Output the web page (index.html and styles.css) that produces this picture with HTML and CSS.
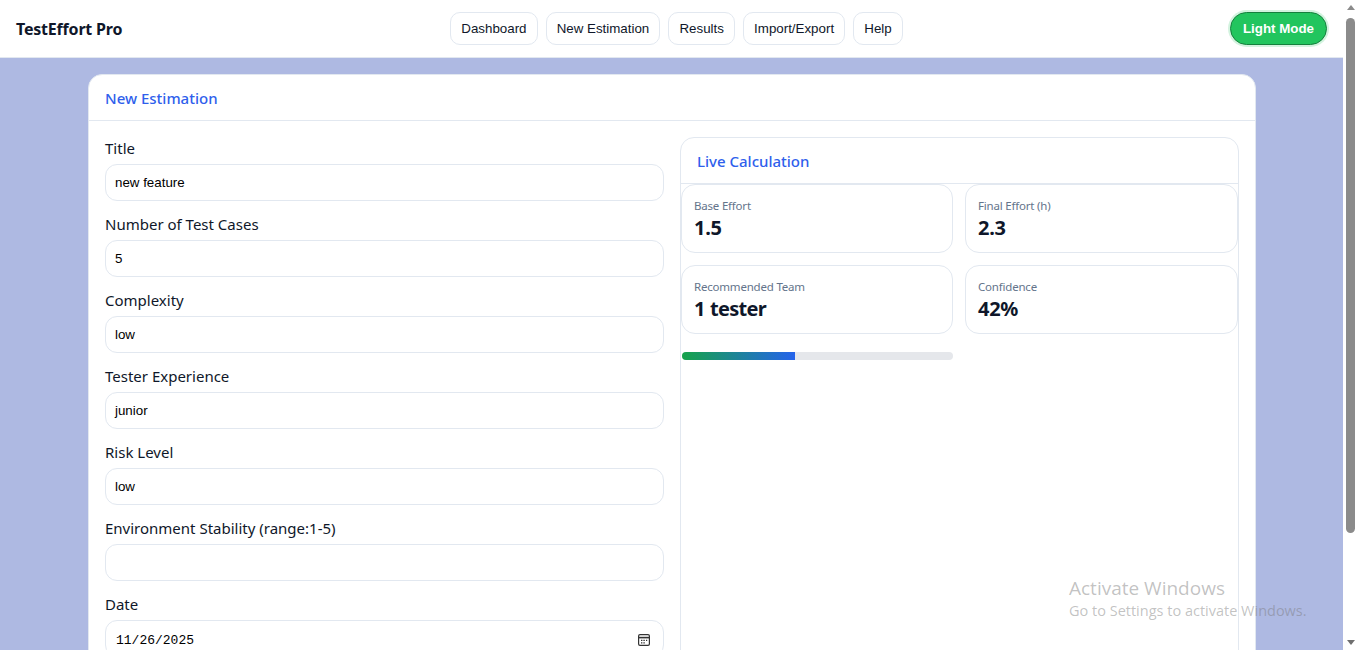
FILE: index.html
```html
<!DOCTYPE html>
<html lang="en">
<head>
<meta charset="utf-8">
<title>TestEffort Pro</title>
<link rel="stylesheet" href="styles.css">
</head>
<body>
<div class="window">
  <div class="viewport">
    <header class="topbar">
      <div class="brand">TestEffort Pro</div>
      <nav class="nav">
        <button class="nav-btn">Dashboard</button>
        <button class="nav-btn">New Estimation</button>
        <button class="nav-btn">Results</button>
        <button class="nav-btn">Import/Export</button>
        <button class="nav-btn">Help</button>
      </nav>
      <button class="mode-btn">Light Mode</button>
    </header>
    <main class="content">
      <section class="card">
        <div class="card-head">New Estimation</div>
        <div class="card-body">
          <form class="form">
            <div class="field"><label class="label">Title</label><div class="input">new feature</div></div>
            <div class="field"><label class="label">Number of Test Cases</label><div class="input">5</div></div>
            <div class="field"><label class="label">Complexity</label><div class="input">low</div></div>
            <div class="field"><label class="label">Tester Experience</label><div class="input">junior</div></div>
            <div class="field"><label class="label">Risk Level</label><div class="input">low</div></div>
            <div class="field"><label class="label">Environment Stability (range:1-5)</label><div class="input"></div></div>
            <div class="field"><label class="label">Date</label>
              <div class="input date"><span class="date-value">11/26/2025</span>
                <svg class="cal" width="14" height="14" viewBox="0 0 14 14" fill="none" stroke="#333" stroke-width="1.2"><rect x="1.6" y="1.6" width="10.8" height="10.8" rx="1.4"/><path d="M1.6 4.6h10.8" stroke-width="1.6"/><path d="M4 7.4h1.4M6.4 7.4h1.4M9 7.4h1.2M4 9.8h1.4M6.4 9.8h1.4"/></svg>
              </div>
            </div>
          </form>
          <aside class="live">
            <div class="live-head">Live Calculation</div>
            <div class="stats">
              <div class="stat"><div class="stat-label">Base Effort</div><div class="stat-value">1.5</div></div>
              <div class="stat"><div class="stat-label">Final Effort (h)</div><div class="stat-value">2.3</div></div>
              <div class="stat"><div class="stat-label">Recommended Team</div><div class="stat-value">1 <span class="tight">tester</span></div></div>
              <div class="stat"><div class="stat-label">Confidence</div><div class="stat-value">42%</div></div>
              <div class="progress"><div class="progress-fill" style="width:41.7%"></div></div>
            </div>
          </aside>
        </div>
      </section>
    </main>
  </div>
  <div class="scrollbar">
    <span class="arrow up"></span>
    <span class="thumb"></span>
    <span class="arrow down"></span>
  </div>
  <div class="activate">
    <div class="activate-title">Activate Windows</div>
    <div class="activate-sub">Go to Settings to activate Windows.</div>
  </div>
</div>
</body>
</html>
```
FILE: styles.css
```css
* { box-sizing: border-box; }
html, body { margin: 0; padding: 0; height: 100%; overflow: hidden; }
body { font-family: "Noto Sans", "Open Sans", sans-serif; color: #0f172a; }

.window { position: relative; display: flex; width: 1358px; height: 650px; overflow: hidden; }
.viewport { width: 1343px; height: 650px; overflow: hidden; background: #aeb9e2; }

.topbar {
  display: flex; align-items: center; justify-content: space-between;
  height: 58px; padding: 0 16px; background: #fff; border-bottom: 1px solid #e2e8f0;
}
.brand { width: 200px; font-size: 16px; font-weight: 700; letter-spacing: -0.2px; color: #0f172a; }
.nav { display: flex; gap: 8px; }
.nav-btn {
  height: 33px; padding: 0 10.1px; background: #fff; border: 1px solid #e2e8f0; border-radius: 10px;
  font: 13.33px "Liberation Sans", Arial, sans-serif; color: #0f172a;
}
.mode-btn {
  width: 97px; height: 33px; margin-left: 93px; padding: 0; border: 1px solid #15803d; border-radius: 17px;
  background: #22c55e; color: #fff; font: 700 13.33px "Liberation Sans", Arial, sans-serif;
  box-shadow: 0 0 0 2px #d3f3df;
}

.content { padding: 16px 87px 0 88px; }
.card { background: #fff; border: 1px solid #e2e8f0; border-radius: 14px; }
.card-head { height: 46px; padding: 12px 16px 0; border-bottom: 1px solid #e2e8f0; font-size: 15px; font-weight: 500; color: #2f5fec; line-height: 22px; }
.card-body { display: grid; grid-template-columns: 559px 559px; column-gap: 16px; padding: 16px; }

.form { display: flex; flex-direction: column; gap: 12px; }
.field { display: flex; flex-direction: column; gap: 4px; }
.label { height: 23px; font-size: 15px; line-height: 22px; color: #0f172a; }
.input {
  display: flex; align-items: center; height: 37px; padding: 0 9px; background: #fff;
  border: 1px solid #e2e8f0; border-radius: 12px; font: 13.33px "Liberation Sans", Arial, sans-serif; color: #000;
}
.date { justify-content: space-between; padding: 0 12px 0 10px; }
.date-value { margin-top: 4px; font-family: "Liberation Mono", monospace; font-size: 13px; }
.cal { margin-top: 2px; }

.live { height: 700px; border: 1px solid #e2e8f0; border-radius: 14px; }
.live-head { height: 46px; padding: 12px 16px 0; border-bottom: 1px solid #e2e8f0; font-size: 15px; font-weight: 500; line-height: 22px; color: #2f5fec; }
.stats { display: grid; grid-template-columns: 272px 273px; column-gap: 12px; row-gap: 12px; }
.stat { height: 69px; padding: 12px 12px 0; border: 1px solid #e2e8f0; border-radius: 14px; }
.stat-label { font-size: 11.5px; letter-spacing: -0.2px; line-height: 17px; color: #64748b; }
.stat-value { font-size: 20px; letter-spacing: -0.3px; line-height: 27px; font-weight: 700; color: #0f172a; }
.tight { letter-spacing: -0.7px; }
.progress { height: 8px; margin: 6px 0 0 1px; border-radius: 4px; background: #e5e7eb; overflow: hidden; }
.progress-fill { height: 100%; background: linear-gradient(90deg, #16a34a, #2563eb); }

.scrollbar { display: flex; flex-direction: column; align-items: center; width: 15px; height: 650px; background: #fff; }
.arrow { width: 0; height: 0; margin: 5px 0; border-left: 4px solid transparent; border-right: 4px solid transparent; }
.arrow.up { border-bottom: 5px solid #8b8b8b; }
.arrow.down { border-top: 5px solid #6f6f6f; margin-top: auto; }
.thumb { width: 9px; height: 515px; margin-top: 3px; background: #8b8b8b; border-radius: 5px; }

.activate { position: absolute; left: 1069px; top: 575px; color: rgba(120, 120, 120, 0.45); font-family: "Open Sans", sans-serif; pointer-events: none; }
.activate-title { font-size: 19px; line-height: 26px; }
.activate-sub { font-size: 14.5px; line-height: 20px; white-space: nowrap; }
```
